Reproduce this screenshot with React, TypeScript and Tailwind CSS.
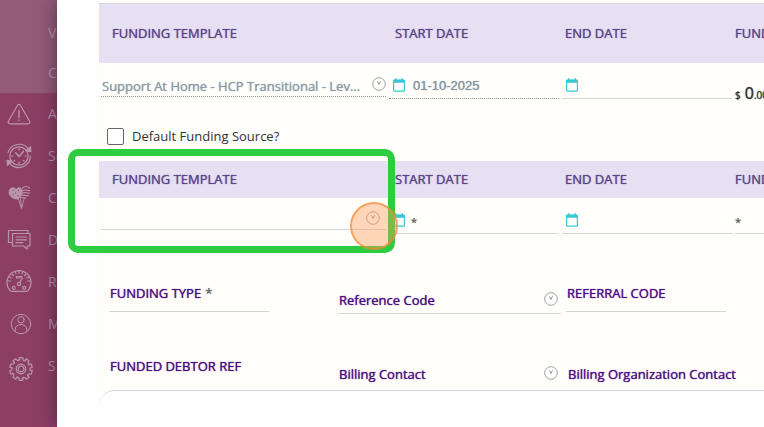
import type { ReactNode } from "react";

const stroke = {
  fill: "none",
  stroke: "#b995a8",
  strokeWidth: 1.2,
  strokeLinecap: "round" as const,
  strokeLinejoin: "round" as const,
};

function AlertIcon() {
  return (
    <svg width="26" height="26" viewBox="0 0 26 26" className="shrink-0" {...stroke}>
      <path d="M11.6 4.2 2.4 20.3c-.7 1.3 0 2.5 1.4 2.5h18.4c1.4 0 2.1-1.2 1.4-2.5L14.4 4.2c-.7-1.2-2.1-1.2-2.8 0Z" />
      <path d="M13 9.5v7M13 19v.6" strokeWidth="1.4" />
    </svg>
  );
}

function ScheduleIcon() {
  return (
    <svg width="26" height="26" viewBox="0 0 26 26" className="shrink-0" {...stroke}>
      <circle cx="13" cy="13" r="9.2" />
      <path d="M2 9.5A11.8 11.8 0 0 1 22.5 5.8M24.5 13A11.8 11.8 0 0 1 3.5 20" />
      <path d="M20.2 7.8 24.9 8.6 24.6 3.8ZM5.8 18.2 1.1 17.4 1.4 22.2Z" fill="#b995a8" />
      <path d="m9.6 9.8 3.4 3.6 4.4-5" strokeWidth="1.5" />
      <path d="M13 5.5v1.4M13 19v1.4M5.5 13h1.4M19 13h1.4M7.8 18.2l.9-.9M18.2 18.2l-.9-.9" />
    </svg>
  );
}

function CareIcon() {
  return (
    <svg width="26" height="26" viewBox="0 0 26 26" className="shrink-0" {...stroke}>
      <path
        d="M12 14C7.500 14.500 3 11.500 3 7 3 2.500 8 1.500 10.200 4.500 12 1.500 16.500 2.500 16.300 6.500 16.300 9.500 14 12.500 12 14Z"
        fill="#b995a8"
        strokeWidth=".8"
      />
      <path d="M16.500 3c2-2 5-1.500 7 0M17 5.500c3-1.500 4.500.5 6.900 0M16.800 8c3-1.500 4.500.5 6.700 0M15.600 10.500c3-1.200 4.500.6 6.600 0M14 12.900c2.500-.8 4 .6 5.600 0" />
      <path d="m12.500 14.500 3 9L18 14M14.500 14.500l1 7" strokeWidth=".9" />
      <path d="M7 5.500v.2M9.500 8v.2M12.500 5.500v.2M7 9.500v.2M12 10.500v.2" stroke="#8d3e65" strokeWidth="1" />
    </svg>
  );
}

function ChatIcon() {
  return (
    <svg width="26" height="26" viewBox="0 0 26 26" className="shrink-0" {...stroke}>
      <path d="M6 15.500H2.500v-12h19.500v2.500" />
      <path d="M6.500 6.500H24v12.500h-2.800v3l-3.700-3h-11Z" />
      <path d="M10 10h10.500M10 12.800h10.500M10 15.600h7" />
    </svg>
  );
}

function GaugeIcon() {
  return (
    <svg width="26" height="26" viewBox="0 0 26 26" className="shrink-0" {...stroke}>
      <path d="M4 21.500A12 12 0 1 1 22 21.500q-.5.8-1.500.8h-15q-1 0-1.500-.8Z" />
      <path d="M13 2v2.500M6 5l1.600 1.800M20 5l-1.600 1.800M1.800 12h2.800M24.200 12h-2.800M9.200 2.800l.8 2M16.800 2.800l-.8 2M3.200 8l2 1M22.800 8l-2 1" />
      <path d="M10.500 7.500h5.500v2.500l-2.500 3.500M10.500 7.500v1.500h4" />
      <circle cx="13" cy="15" r="1.700" />
      <circle cx="7.800" cy="18.800" r="1.500" />
      <circle cx="18.200" cy="18.800" r="1.500" />
    </svg>
  );
}

function PersonIcon() {
  return (
    <svg width="26" height="26" viewBox="0 0 26 26" className="shrink-0" {...stroke} strokeWidth="1">
      <circle cx="15" cy="13" r="9.700" />
      <circle cx="15" cy="8.800" r="3.200" />
      <path d="M9.200 20.500v-2.300c0-6.200 11.600-6.200 11.600 0v2.300" />
    </svg>
  );
}

function GearIcon() {
  const teeth = [0, 36, 72, 108, 144, 180, 216, 252, 288, 324];
  return (
    <svg width="26" height="26" viewBox="0 0 26 26" className="shrink-0 overflow-visible" {...stroke}>
      <g transform="translate(15 16)">
        {teeth.map((a) => (
          <path
            key={a}
            transform={`rotate(${a})`}
            d="M-2 -9.200-1.700-11.300H1.700L2-9.200Q3.100-7.600 4.600-8.300"
          />
        ))}
        <circle r="4.800" />
        <circle r="2.900" />
      </g>
    </svg>
  );
}

function CalendarIcon() {
  return (
    <svg width="12" height="14" viewBox="0 0 12 14" className="shrink-0">
      <rect x=".6" y="2" width="10.800" height="11.200" rx="1" fill="none" stroke="#35c9cf" strokeWidth="1.200" />
      <path d="M.5 1.800h11v3H.5ZM2 .3h1.400v2H2ZM8.600.3H10v2H8.600Z" fill="#35c9cf" />
    </svg>
  );
}

function ChevronBadge() {
  return (
    <svg width="14" height="14" viewBox="0 0 14 14" className="shrink-0" fill="none" stroke="#8c8798">
      <circle cx="7" cy="7" r="6.300" strokeWidth=".8" />
      <path d="M5.500 4.300 7 7.400l1.500-3.100" strokeWidth=".9" />
    </svg>
  );
}

function NavItem({ icon, label }: { icon: ReactNode; label: string }) {
  return (
    <a href="#" className="flex h-[42px] items-center gap-4 pl-[6px] text-sm text-[#b995a8]">
      {icon}
      <span>{label}</span>
    </a>
  );
}

const heavy = "[text-shadow:0_0_1px_currentColor]";

function HeaderRow({ tall }: { tall?: boolean }) {
  return (
    <div
      className={`grid grid-cols-[283px_170px_170px_1fr] items-center bg-[#e7e0f3] pl-[13px] text-[13px] text-[#5b4589] ${heavy} ${
        tall ? "h-[60px] border-t border-[#d8d8dc]" : "h-[37px]"
      }`}
    >
      <span>FUNDING TEMPLATE</span>
      <span>START DATE</span>
      <span>END DATE</span>
      <span>FUNDING</span>
    </div>
  );
}

const control = "w-0 min-w-0 flex-1 appearance-none bg-transparent outline-none";

export default function App() {
  return (
    <div className="relative flex min-h-screen overflow-hidden bg-white font-['Open_Sans',sans-serif]">
      <nav className="w-[57px] shrink-0 overflow-hidden bg-[#8d3e65]">
        <div className="flex h-[93px] flex-col bg-[#935b78] pt-[13px] pl-12 text-sm text-[#b995a8]">
          <a href="#" className="flex h-10 items-center">V</a>
          <a href="#" className="flex h-10 items-center">C</a>
        </div>
        <NavItem icon={<AlertIcon />} label="A" />
        <NavItem icon={<ScheduleIcon />} label="Se" />
        <NavItem icon={<CareIcon />} label="C" />
        <NavItem icon={<ChatIcon />} label="D" />
        <NavItem icon={<GaugeIcon />} label="R" />
        <NavItem icon={<PersonIcon />} label="M" />
        <NavItem icon={<GearIcon />} label="S" />
      </nav>

      <main className="flex min-w-0 flex-1 flex-col bg-white pl-[42px] whitespace-nowrap shadow-[0_0_18px_rgba(40,20,40,0.6)]">
        <form className="flex flex-1 flex-col bg-[#fffefa] pt-[3px]">
          <HeaderRow tall />
          <div className="grid h-[62px] grid-cols-[285px_170px_170px_1fr] gap-x-[3px] pl-[2px]">
            <div className="flex h-[34px] items-end border-b border-dotted border-[#8f8f98] text-[#8c9ca8]">
              <select aria-label="Funding template" className={`${control} ${heavy} pl-[1px] text-[13px] leading-5`}>
                <option>Support At Home - HCP Transitional - Lev...</option>
              </select>
              <span className="pb-[5px]"><ChevronBadge /></span>
            </div>
            <label className="flex h-9 items-center gap-2 border-b border-dotted border-[#8f8f98] pt-[9px] pl-1">
              <CalendarIcon />
              <input
                aria-label="Start date"
                defaultValue="01-10-2025"
                className={`${control} ${heavy} pt-[2px] font-['Liberation_Sans',sans-serif] text-[13px] text-[#8494a0]`}
              />
            </label>
            <label className="flex h-9 items-center gap-2 border-b border-[#d5d5d8] pt-[9px] pl-1">
              <CalendarIcon />
              <input aria-label="End date" className={`${control} text-[13px]`} />
            </label>
            <div className={`flex h-[42px] items-baseline gap-1 pt-[18px] text-[#333] ${heavy}`}>
              <span className="text-[10px]">$</span>
              <span className="text-base leading-6">
                0<span className="text-[10px]">.00</span>
              </span>
            </div>
          </div>
          <label className="flex h-9 items-start gap-2 pt-[1px] pl-2 text-[13px] leading-5 text-[#333]">
            <input type="checkbox" className="mt-[2px] size-[17px] appearance-none rounded-xs border border-[#666] bg-white" />
            Default Funding Source?
          </label>

          <HeaderRow />
          <div className="grid h-[74px] grid-cols-[285px_170px_170px_1fr] gap-x-[3px] pl-[2px]">
            <div className="flex h-8 items-center border-b border-[#d5d5d8] pt-2 pr-[6px] text-[13px]">
              <select aria-label="New funding template" className={control}><option></option></select>
              <ChevronBadge />
            </div>
            <label className="flex h-9 items-center gap-[6px] border-b border-[#d5d5d8] pt-[9px] pl-1 text-[13px] text-[#666]">
              <CalendarIcon />
              <span className={`pt-1 text-[11px] ${heavy}`}>*</span>
              <input aria-label="New start date" className={control} />
            </label>
            <label className="flex h-9 items-center gap-1 border-b border-[#d5d5d8] pt-[9px] pl-1 text-[13px]">
              <CalendarIcon />
              <input aria-label="New end date" className={control} />
            </label>
            <label className="flex h-9 items-center border-b border-[#d5d5d8] pt-[13px] text-[13px] text-[#666]">
              <span className={`text-[11px] ${heavy}`}>*</span>
              <input aria-label="Funding amount" className={control} />
            </label>
          </div>

          <div className={`grid grid-cols-[228px_229px_1fr] pl-[10px] text-[13px] leading-5 text-[#4b0f82] ${heavy}`}>
            <label className="flex h-10 w-[160px] items-start gap-1 border-b border-[#d5d5d8] pt-[11px] pl-[1px]">
              FUNDING TYPE <span className="text-[#666]">*</span>
              <input className={control} />
            </label>
            <label className="flex h-[42px] w-[224px] items-end gap-1 border-b border-[#d5d5d8] pr-[3px] pb-[3px] pl-[2px]">
              Reference Code
              <select className={control}><option></option></select>
              <span className="pb-1"><ChevronBadge /></span>
            </label>
            <label className="flex h-10 w-[160px] items-start gap-1 border-b border-[#d5d5d8] pt-[11px] pl-[1px]">
              REFERRAL CODE
              <input className={control} />
            </label>
            <label className="flex h-[76px] w-[160px] items-start gap-1 pt-[42px] pl-[1px]">
              FUNDED DEBTOR REF
              <input className={control} />
            </label>
            <label className="flex h-[76px] w-[224px] items-end gap-1 pr-[3px] pb-[6px] pl-[2px]">
              Billing Contact
              <select className={control}><option></option></select>
              <span className="pb-1"><ChevronBadge /></span>
            </label>
            <label className="flex h-[76px] items-end gap-1 pb-[6px] pl-[2px]">
              Billing Organization Contact
              <select className={control}><option></option></select>
            </label>
          </div>
          <section className="min-h-9 flex-1 rounded-tl-2xl border-t border-[#d5d5d8] bg-white" />
        </form>
      </main>

      <div className="pointer-events-none absolute top-[149px] left-[68px] h-[104px] w-[327px] rounded-[10px] border-[7px] border-[#2ecc40]" />
      <div className="pointer-events-none absolute top-[202px] left-[350px] size-12 rounded-full border-2 border-[#f0872f]/65 bg-[#ff9a52]/40" />
    </div>
  );
}
